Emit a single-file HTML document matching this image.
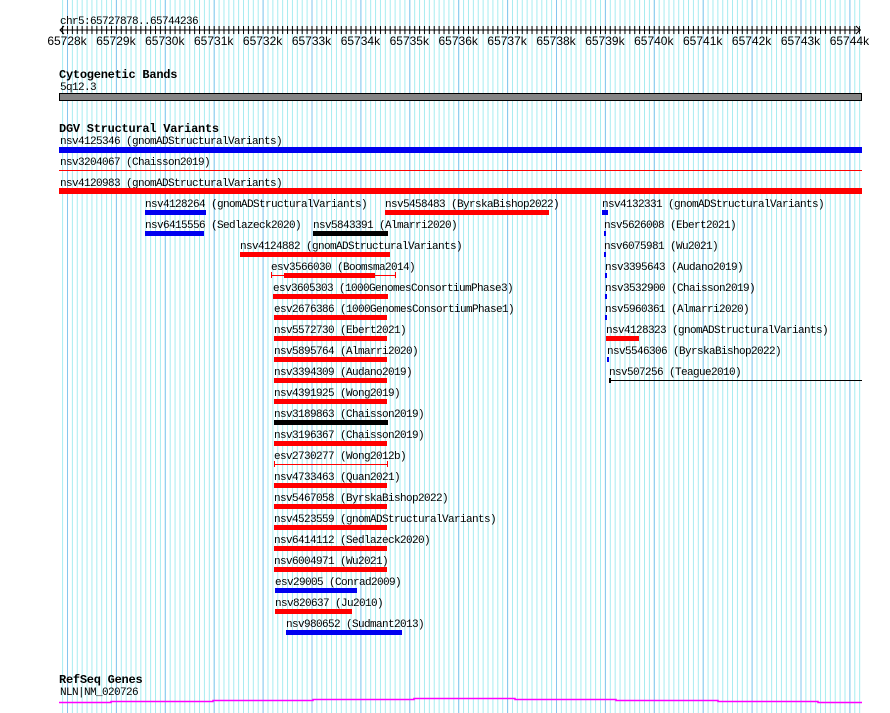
<!DOCTYPE html>
<html><head><meta charset="utf-8"><style>
html,body{margin:0;padding:0;background:#fff;width:890px;height:713px;overflow:hidden}
svg{display:block}
text{font-family:"Liberation Mono",monospace;font-size:11px;letter-spacing:-0.6px;fill:#000}
.h{font-weight:bold;font-size:12px;letter-spacing:-0.25px}
.r{font-family:"Liberation Sans",sans-serif;font-size:12px;letter-spacing:0}
</style></head><body>
<svg width="890" height="713" xmlns="http://www.w3.org/2000/svg">
<defs>
<pattern id="mn" x="62.1" y="0" width="4.89" height="713" patternUnits="userSpaceOnUse"><rect x="0" y="0" width="1" height="713" fill="#a6ecf0"/></pattern>
<pattern id="mj" x="67" y="0" width="48.9" height="713" patternUnits="userSpaceOnUse"><rect x="0" y="0" width="1" height="713" fill="#86c6ee"/></pattern>
<pattern id="tk" x="62.1" y="0" width="4.89" height="40" patternUnits="userSpaceOnUse"><rect x="0" y="26" width="1" height="8" fill="#000"/></pattern>
</defs>
<rect x="59" y="0" width="803" height="713" fill="url(#mn)"/>
<rect x="59" y="0" width="803" height="713" fill="url(#mj)"/>
<!-- ruler -->
<text x="60" y="24">chr5:65727878..65744236</text>
<rect x="62" y="26" width="798" height="8" fill="url(#tk)"/>
<rect x="60" y="29.5" width="801" height="1" fill="#000"/>
<path d="M64 26 L60 30 L64 34 M856 26 L860 30 L856 34" stroke="#000" fill="none"/>
<g text-anchor="middle" class="r">
<text class="r" x="67" y="45">65728k</text><text class="r" x="115.9" y="45">65729k</text><text class="r" x="164.8" y="45">65730k</text><text class="r" x="213.7" y="45">65731k</text><text class="r" x="262.6" y="45">65732k</text><text class="r" x="311.5" y="45">65733k</text><text class="r" x="360.4" y="45">65734k</text><text class="r" x="409.3" y="45">65735k</text><text class="r" x="458.2" y="45">65736k</text><text class="r" x="507.1" y="45">65737k</text><text class="r" x="556" y="45">65738k</text><text class="r" x="604.9" y="45">65739k</text><text class="r" x="653.8" y="45">65740k</text><text class="r" x="702.7" y="45">65741k</text><text class="r" x="751.6" y="45">65742k</text><text class="r" x="800.5" y="45">65743k</text><text class="r" x="849.4" y="45">65744k</text>
</g>
<!-- cyto -->
<text class="h" x="59" y="78">Cytogenetic Bands</text>
<text x="60" y="90">5q12.3</text>
<rect x="59.5" y="93.5" width="802" height="7" fill="#858585" stroke="#000"/>
<!-- DGV -->
<text class="h" x="59" y="132">DGV Structural Variants</text>
<g>
<text x="60" y="144">nsv4125346 (gnomADStructuralVariants)</text><rect x="59" y="147" width="803" height="6" fill="#0000f0"/>
<text x="60" y="165">nsv3204067 (Chaisson2019)</text><rect x="59" y="170" width="803" height="1" fill="#f00"/>
<text x="60" y="186">nsv4120983 (gnomADStructuralVariants)</text><rect x="59" y="188" width="803" height="6" fill="#f00"/>

<text x="145" y="207">nsv4128264 (gnomADStructuralVariants)</text><rect x="145" y="210" width="61" height="5" fill="#0000f0"/>
<text x="385" y="207">nsv5458483 (ByrskaBishop2022)</text><rect x="385" y="210" width="164" height="5" fill="#f00"/>
<text x="602" y="207">nsv4132331 (gnomADStructuralVariants)</text><rect x="602" y="210" width="6" height="5" fill="#0000f0"/>

<text x="145" y="228">nsv6415556 (Sedlazeck2020)</text><rect x="145" y="231" width="59" height="5" fill="#0000f0"/>
<text x="313" y="228">nsv5843391 (Almarri2020)</text><rect x="313" y="231" width="75" height="5" fill="#000"/>
<text x="604" y="228">nsv5626008 (Ebert2021)</text><rect x="604" y="231" width="2" height="5" fill="#0000f0"/>

<text x="240" y="249">nsv4124882 (gnomADStructuralVariants)</text><rect x="240" y="252" width="150" height="5" fill="#f00"/>
<text x="604" y="249">nsv6075981 (Wu2021)</text><rect x="604" y="252" width="2" height="5" fill="#0000f0"/>

<text x="271" y="270">esv3566030 (Boomsma2014)</text><rect x="271" y="275" width="125" height="1" fill="#f00"/><rect x="271" y="272" width="1" height="6" fill="#f00"/><rect x="395" y="272" width="1" height="6" fill="#f00"/><rect x="284" y="273" width="91" height="5" fill="#f00"/>
<text x="605" y="270">nsv3395643 (Audano2019)</text><rect x="605" y="273" width="2" height="5" fill="#0000f0"/>

<text x="273" y="291">esv3605303 (1000GenomesConsortiumPhase3)</text><rect x="273" y="294" width="115" height="5" fill="#f00"/>
<text x="605" y="291">nsv3532900 (Chaisson2019)</text><rect x="605" y="294" width="2" height="5" fill="#0000f0"/>

<text x="274" y="312">esv2676386 (1000GenomesConsortiumPhase1)</text><rect x="274" y="315" width="113" height="5" fill="#f00"/>
<text x="605" y="312">nsv5960361 (Almarri2020)</text><rect x="605" y="315" width="2" height="5" fill="#0000f0"/>

<text x="274" y="333">nsv5572730 (Ebert2021)</text><rect x="274" y="336" width="113" height="5" fill="#f00"/>
<text x="606" y="333">nsv4128323 (gnomADStructuralVariants)</text><rect x="606" y="336" width="33" height="5" fill="#f00"/>

<text x="274" y="354">nsv5895764 (Almarri2020)</text><rect x="274" y="357" width="113" height="5" fill="#f00"/>
<text x="607" y="354">nsv5546306 (ByrskaBishop2022)</text><rect x="607" y="357" width="2" height="5" fill="#0000f0"/>

<text x="274" y="375">nsv3394309 (Audano2019)</text><rect x="274" y="378" width="113" height="5" fill="#f00"/>
<text x="609" y="375">nsv507256 (Teague2010)</text><rect x="609" y="380" width="253" height="1" fill="#000"/><rect x="609" y="378" width="2" height="5" fill="#000"/>

<text x="274" y="396">nsv4391925 (Wong2019)</text><rect x="274" y="399" width="113" height="5" fill="#f00"/>
<text x="274" y="417">nsv3189863 (Chaisson2019)</text><rect x="274" y="420" width="114" height="5" fill="#000"/>
<text x="274" y="438">nsv3196367 (Chaisson2019)</text><rect x="274" y="441" width="113" height="5" fill="#f00"/>
<text x="274" y="459">esv2730277 (Wong2012b)</text><rect x="274" y="464" width="114" height="1" fill="#f00"/><rect x="274" y="461" width="1" height="6" fill="#f00"/><rect x="387" y="461" width="1" height="6" fill="#f00"/>
<text x="274" y="480">nsv4733463 (Quan2021)</text><rect x="274" y="483" width="113" height="5" fill="#f00"/>
<text x="274" y="501">nsv5467058 (ByrskaBishop2022)</text><rect x="274" y="504" width="113" height="5" fill="#f00"/>
<text x="274" y="522">nsv4523559 (gnomADStructuralVariants)</text><rect x="274" y="525" width="113" height="5" fill="#f00"/>
<text x="274" y="543">nsv6414112 (Sedlazeck2020)</text><rect x="274" y="546" width="113" height="5" fill="#f00"/>
<text x="274" y="564">nsv6004971 (Wu2021)</text><rect x="274" y="567" width="113" height="5" fill="#f00"/>
<text x="275" y="585">esv29005 (Conrad2009)</text><rect x="275" y="588" width="82" height="5" fill="#0000f0"/>
<text x="275" y="606">nsv820637 (Ju2010)</text><rect x="275" y="609" width="77" height="5" fill="#f00"/>
<text x="286" y="627">nsv980652 (Sudmant2013)</text><rect x="286" y="630" width="116" height="5" fill="#0000f0"/>
</g>
<!-- RefSeq -->
<text class="h" x="59" y="683">RefSeq Genes</text>
<text x="60" y="695">NLN|NM_020726</text>
<path d="M59 702.5 H111 V701.5 H213 V700.5 H313 V699.5 H414 V698.5 H515 V699.5 H616 V700.5 H718 V701.5 H818 V702.5 H862" stroke="#f0f" stroke-width="1.5" fill="none"/>
</svg>
</body></html>
